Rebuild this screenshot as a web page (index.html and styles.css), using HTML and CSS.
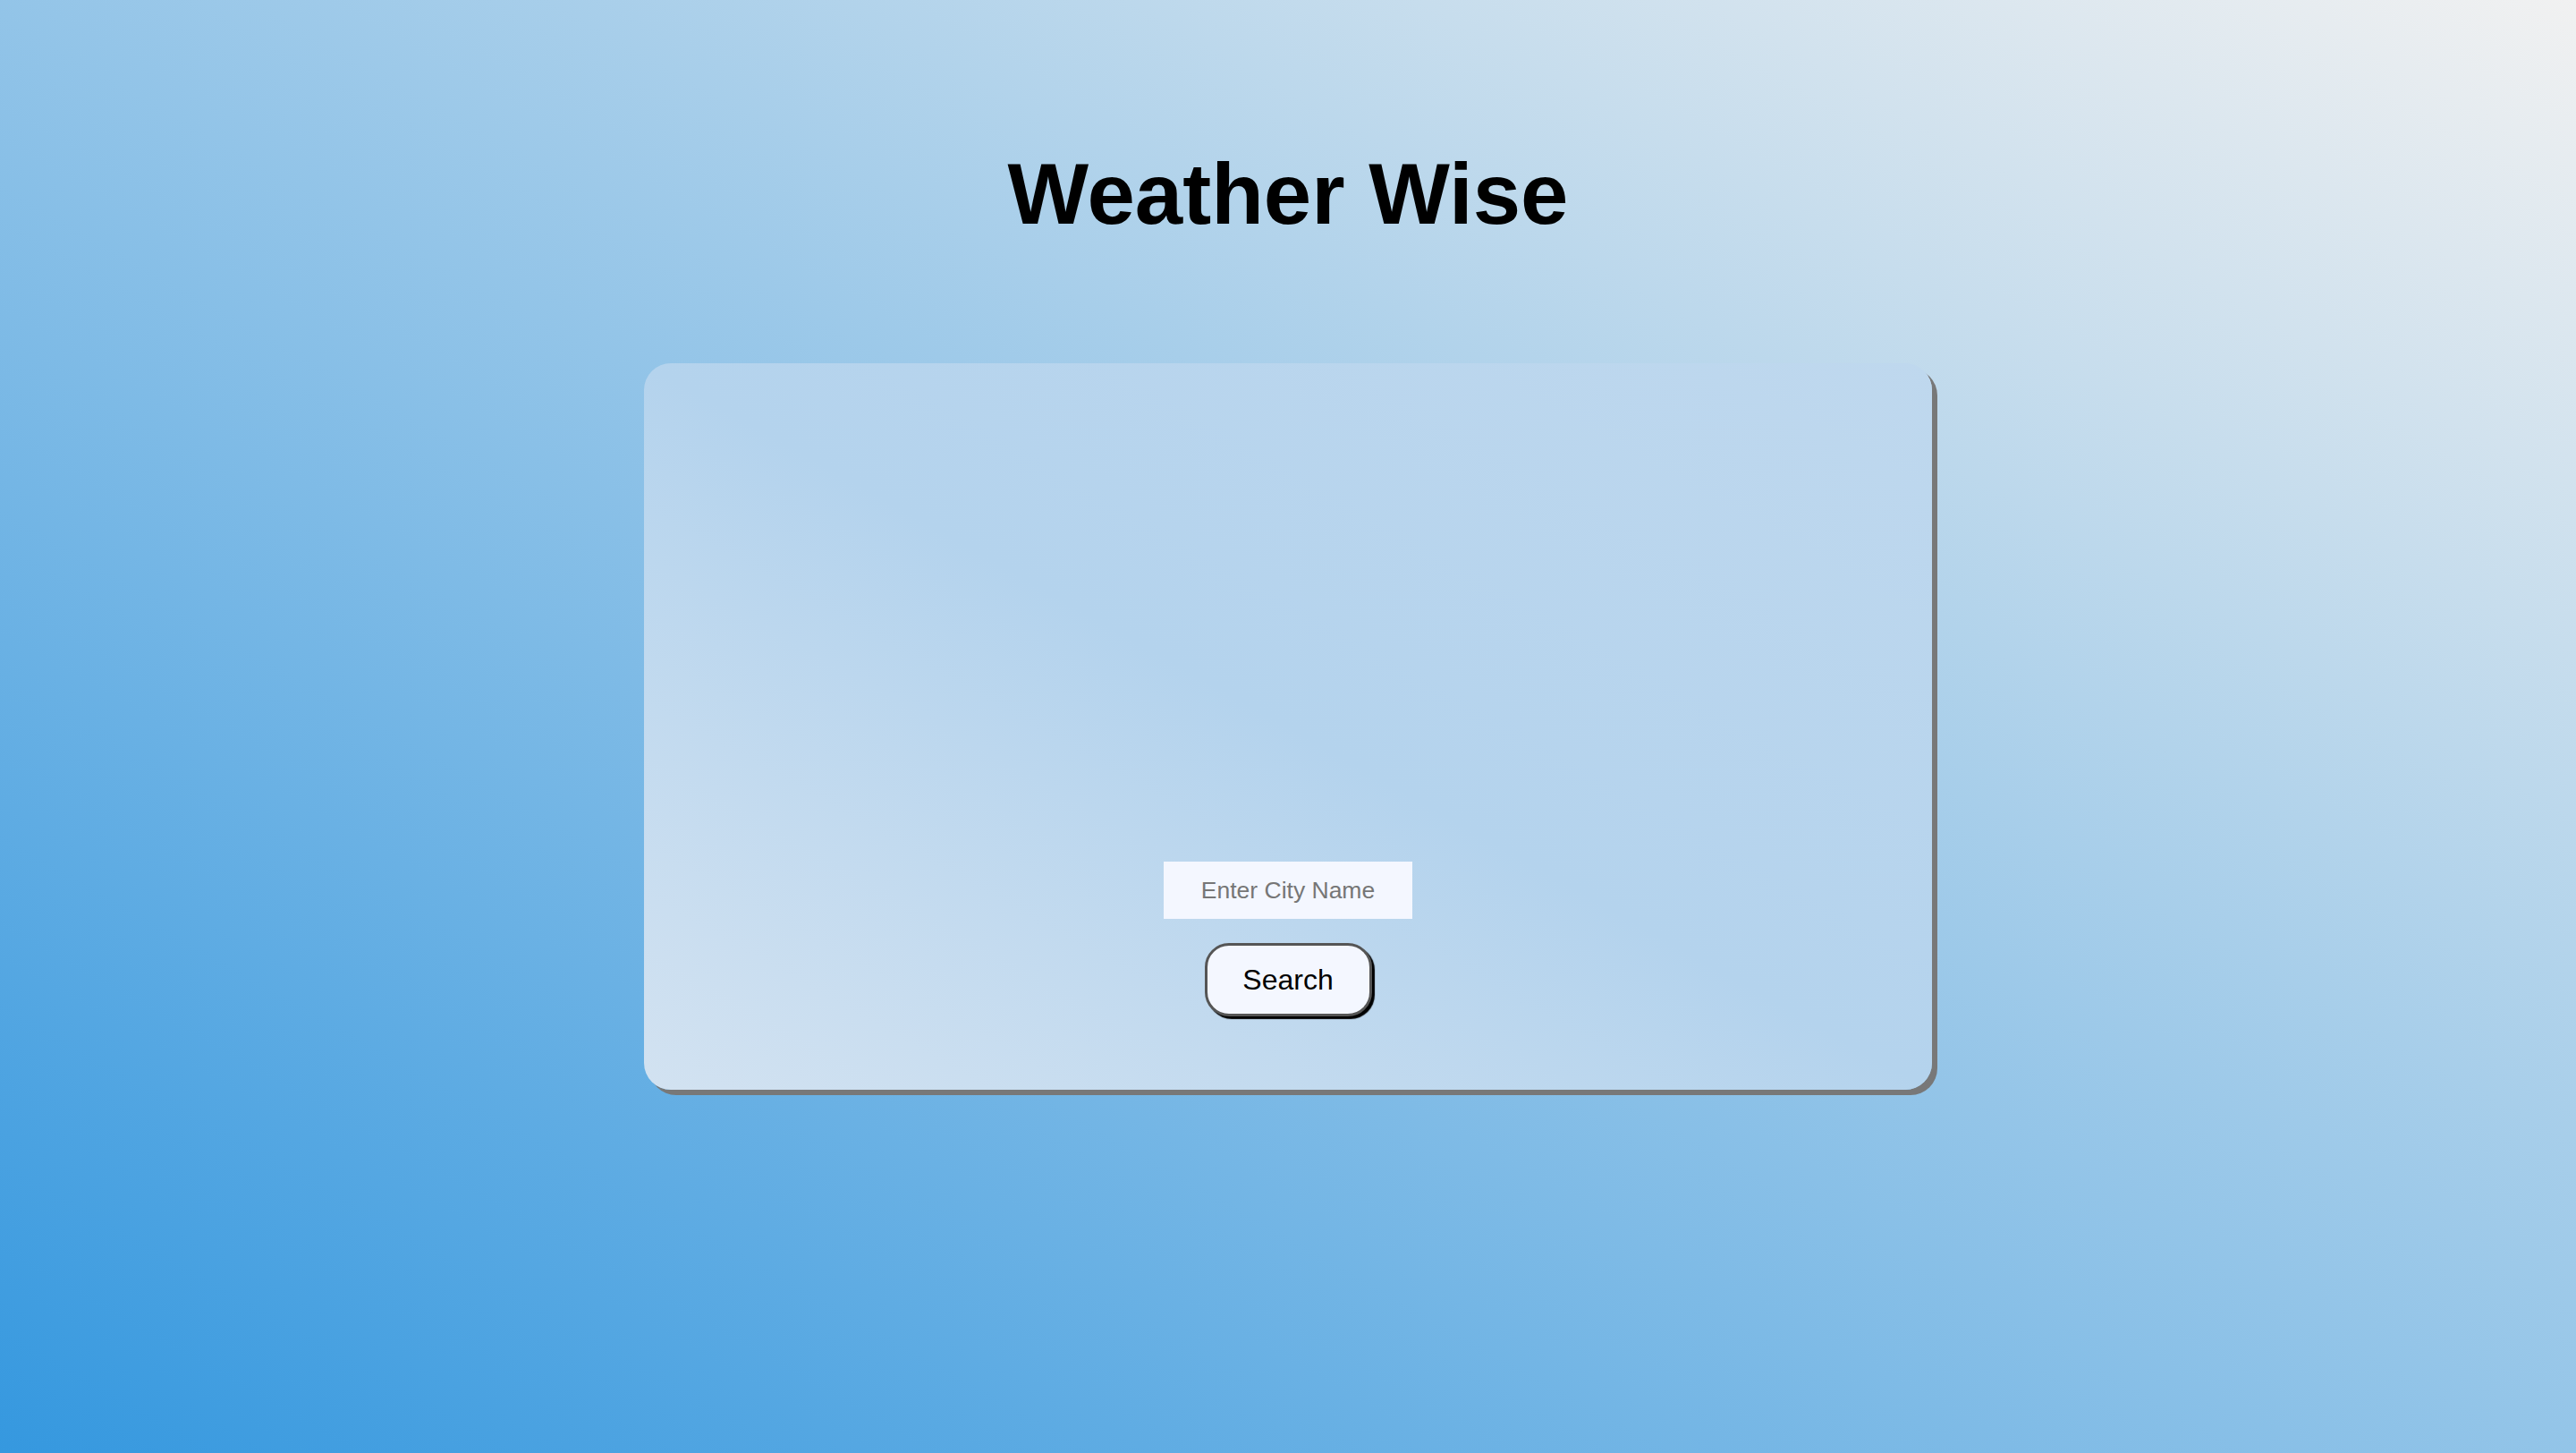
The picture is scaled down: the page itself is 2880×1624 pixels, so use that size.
FILE: index.html
```html
<!DOCTYPE html>
<html lang="en">
<head>
<meta charset="UTF-8">
<title>Weather Wise</title>
<link rel="stylesheet" href="styles.css">
</head>
<body>
  <h1 class="title">Weather Wise</h1>
  <main class="card">
    <div class="weather"></div>
    <form class="search">
      <input class="city" type="text" placeholder="Enter City Name">
      <button class="btn" type="button">Search</button>
    </form>
  </main>
</body>
</html>
```

FILE: styles.css
```css
html, body {
  margin: 0;
  padding: 0;
}
body {
  min-height: 100vh;
  background: linear-gradient(to top right, #3598df, #f1f1f1);
  font-family: "Liberation Sans", Arial, sans-serif;
  display: flex;
  flex-direction: column;
  align-items: center;
  overflow: hidden;
}
.title {
  margin: 162px 0 0;
  font-size: 96px;
  font-weight: 700;
  line-height: 110px;
  color: #000;
}
.card {
  margin-top: 134px;
  width: 1440px;
  height: 812px;
  box-sizing: border-box;
  border-radius: 30px;
  background: linear-gradient(to top right, #d2e2f1 0%, #b4d3ed 50%, #bfd8ee 100%);
  box-shadow: 6px 6px 0 #787878;
  display: flex;
  flex-direction: column;
  justify-content: flex-end;
  align-items: center;
  padding-bottom: 82px;
}
.search {
  display: flex;
  flex-direction: column;
  align-items: center;
  gap: 27px;
}
.city {
  width: 278px;
  height: 64px;
  box-sizing: border-box;
  border: none;
  outline: none;
  background: #f4f7ff;
  font-family: "Liberation Sans", Arial, sans-serif;
  font-size: 26.5px;
  text-align: center;
  color: #000;
  padding: 0 10px;
}
.city::placeholder {
  color: #767676;
}
.btn {
  width: 187px;
  height: 82px;
  box-sizing: border-box;
  border: 3px solid #555;
  border-radius: 27px;
  background: #f4f7ff;
  box-shadow: 3px 3px 1px #000;
  font-family: "Liberation Sans", Arial, sans-serif;
  font-size: 32px;
  color: #000;
  padding: 0;
  cursor: pointer;
}
```
